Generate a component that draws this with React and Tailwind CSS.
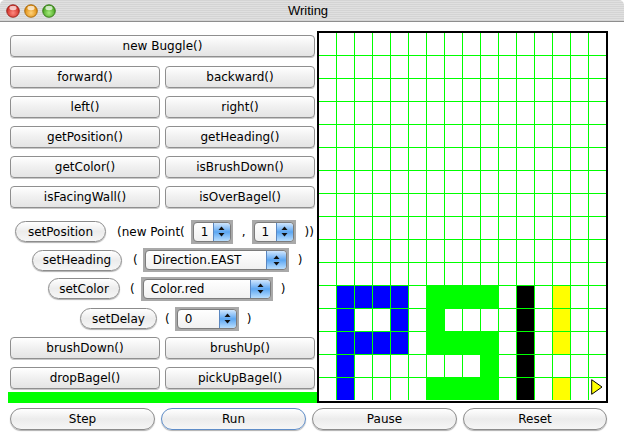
import React from 'react';

const B = 'bg-[#0000ff]';
const G = 'bg-[#00ff00]';
const K = 'bg-black';
const Y = 'bg-[#ffff00]';

const painted = {
  11: { 1: B, 2: B, 3: B, 4: B, 6: G, 7: G, 8: G, 9: G, 11: K, 13: Y },
  12: { 1: B, 4: B, 6: G, 11: K, 13: Y },
  13: { 1: B, 2: B, 3: B, 4: B, 6: G, 7: G, 8: G, 9: G, 11: K, 13: Y },
  14: { 1: B, 9: G, 11: K },
  15: { 1: B, 6: G, 7: G, 8: G, 9: G, 11: K, 13: Y },
};

const Light = ({ from, to, edge }) => (
  <svg width="14" height="14" viewBox="0 0 14 14">
    <defs>
      <radialGradient id={'g' + from.slice(1)} cx="50%" cy="65%" r="60%">
        <stop offset="0%" stopColor={from} />
        <stop offset="100%" stopColor={to} />
      </radialGradient>
    </defs>
    <circle cx="7" cy="7" r="6.3" fill={'url(#g' + from.slice(1) + ')'} stroke={edge} strokeWidth="0.8" />
    <ellipse cx="7" cy="4" rx="3.6" ry="2.2" fill="#fff" opacity="0.7" />
  </svg>
);

const TitleBar = () => (
  <div className="h-[22px] flex items-center relative border-b border-[#8e8e8e] bg-[repeating-linear-gradient(0deg,#d4d4d4_0px,#d4d4d4_1px,#e0e0e0_1px,#e0e0e0_2px)] rounded-t-[5px]">
    <div className="flex gap-[4px] pl-[6px]">
      <Light from="#ff8a80" to="#c9231b" edge="#8b1a14" />
      <Light from="#ffd27a" to="#d98300" edge="#9a5c00" />
      <Light from="#a6ec7c" to="#3d9a16" edge="#2a6b0d" />
    </div>
    <div className="flex-1 text-center pr-[64px] font-['Liberation_Sans',sans-serif] text-[13px] text-black">
      Writing
    </div>
  </div>
);

const SquareButton = ({ children, className = '' }) => (
  <div
    className={
      'h-[22px] flex items-center justify-center rounded-[4px] border border-[#8f8f8f] bg-gradient-to-b from-white via-[#f0f0f0] to-[#e4e4e4] shadow-[0_1px_0_#c8c8c8] ' +
      className
    }
  >
    {children}
  </div>
);

const Pill = ({ children, className = '', blue = false }) => (
  <div
    className={
      'h-[21px] flex items-center justify-center rounded-full border bg-gradient-to-b from-white via-[#ececec] to-[#f6f6f6] shadow-[0_1px_1px_#b0b0b0] ' +
      (blue ? 'border-[#5f8dc8] shadow-[0_0_0_2px_#a9c8ee] ' : 'border-[#8c8c8c] ') +
      className
    }
  >
    {children}
  </div>
);

const Arrows = () => (
  <svg width="7" height="11" viewBox="0 0 7 11">
    <path d="M3.5 0.5 L6.5 4 L0.5 4 Z" fill="#111" />
    <path d="M3.5 10.5 L6.5 7 L0.5 7 Z" fill="#111" />
  </svg>
);

const Chooser = ({ value, className = '', btn = 'w-[17px]' }) => (
  <div className={'h-[24px] p-[2px] bg-[#a9a9a9] ' + className}>
    <div className="h-full flex rounded-[4px] border border-[#7c7c7c] bg-gradient-to-b from-white to-[#f1f1f1] overflow-hidden">
      <div className="flex-1 flex items-center pl-[7px]">{value}</div>
      <div
        className={
          'h-full flex items-center justify-center rounded-r-[3px] border-l border-[#5a87c0] bg-gradient-to-b from-[#cfe6fd] via-[#5ba6f1] to-[#b8defe] ' +
          btn
        }
      >
        <Arrows />
      </div>
    </div>
  </div>
);

const Grid = () => (
  <div className="mt-[9px] border-2 border-black bg-white">
    <div className="grid grid-cols-[repeat(16,17px)] grid-rows-[repeat(16,22px)] gap-px bg-[#00ff00]">
      {Array.from({ length: 16 }).map((_, r) =>
        Array.from({ length: 16 }).map((_, c) => {
          const color = (painted[r] && painted[r][c]) || 'bg-white';
          return (
            <div key={r + '-' + c} className={color + ' flex items-start'}>
              {r === 15 && c === 15 && (
                <svg width="12" height="16" viewBox="0 0 12 16" className="ml-[2px] mt-[1px]">
                  <path d="M0.7 0.7 L11 8 L0.7 15.3 Z" fill="#ffff00" stroke="#000" strokeWidth="1" />
                </svg>
              )}
            </div>
          );
        }),
      )}
    </div>
  </div>
);

const pairs = [
  ['forward()', 'backward()'],
  ['left()', 'right()'],
  ['getPosition()', 'getHeading()'],
  ['getColor()', 'isBrushDown()'],
  ['isFacingWall()', 'isOverBagel()'],
];

export default function App() {
  return (
    <div className="w-[624px] h-[439px] bg-white overflow-hidden text-black font-['DejaVu_Sans',sans-serif] text-[12px]">
      <TitleBar />
      <div className="flex">
        <div className="w-[317px] pl-[10px] pt-[13px] flex flex-col">
          <SquareButton className="w-[305px] h-[21px]">new Buggle()</SquareButton>
          {pairs.map(([a, b], i) => (
            <div key={a} className={'flex gap-[5px] w-[305px] ' + (i === 0 ? 'mt-[9px]' : 'mt-[8px]')}>
              <SquareButton className="w-[150px]">{a}</SquareButton>
              <SquareButton className="w-[150px]">{b}</SquareButton>
            </div>
          ))}

          <div className="mt-[12px] h-[23px] flex items-center ml-[5px]">
            <Pill className="w-[91px]">setPosition</Pill>
            <span className="ml-[11px]">(new Point(</span>
            <Chooser value="1" className="ml-[6px] w-[42px] h-[23px]" />
            <span className="ml-[9px]">,</span>
            <Chooser value="1" className="ml-[6px] w-[44px] h-[23px]" />
            <span className="ml-[9px]">))</span>
          </div>

          <div className="mt-[5px] h-[24px] flex items-center ml-[22px]">
            <Pill className="w-[90px]">setHeading</Pill>
            <span className="ml-[11px]">(</span>
            <Chooser value="Direction.EAST" className="ml-[5px] w-[146px]" btn="w-[20px]" />
            <span className="ml-[9px]">)</span>
          </div>

          <div className="mt-[5px] h-[23px] flex items-center ml-[38px]">
            <Pill className="w-[72px]">setColor</Pill>
            <span className="ml-[10px]">(</span>
            <Chooser value="Color.red" className="ml-[6px] w-[132px] h-[23px]" btn="w-[20px]" />
            <span className="ml-[8px]">)</span>
          </div>

          <div className="mt-[7px] h-[23px] flex items-center ml-[70px]">
            <Pill className="w-[77px]">setDelay</Pill>
            <span className="ml-[8px]">(</span>
            <Chooser value="0" className="ml-[5px] w-[64px] h-[23px]" />
            <span className="ml-[8px]">)</span>
          </div>

          <div className="flex gap-[5px] w-[305px] mt-[7px]">
            <SquareButton className="w-[150px]">brushDown()</SquareButton>
            <SquareButton className="w-[150px]">brushUp()</SquareButton>
          </div>
          <div className="flex gap-[5px] w-[305px] mt-[8px]">
            <SquareButton className="w-[150px] h-[21px]">dropBagel()</SquareButton>
            <SquareButton className="w-[150px] h-[21px]">pickUpBagel()</SquareButton>
          </div>
          <div className="mt-[3px] -ml-[2px] w-[309px] h-[11px] bg-[#00ff00]" />
        </div>
        <Grid />
      </div>
      <div className="flex gap-[6px] pl-[10px] mt-[5px]">
        <Pill className="w-[145px] h-[22px]">Step</Pill>
        <Pill className="w-[145px] h-[22px]" blue>Run</Pill>
        <Pill className="w-[145px] h-[22px]">Pause</Pill>
        <Pill className="w-[144px] h-[22px]">Reset</Pill>
      </div>
    </div>
  );
}
